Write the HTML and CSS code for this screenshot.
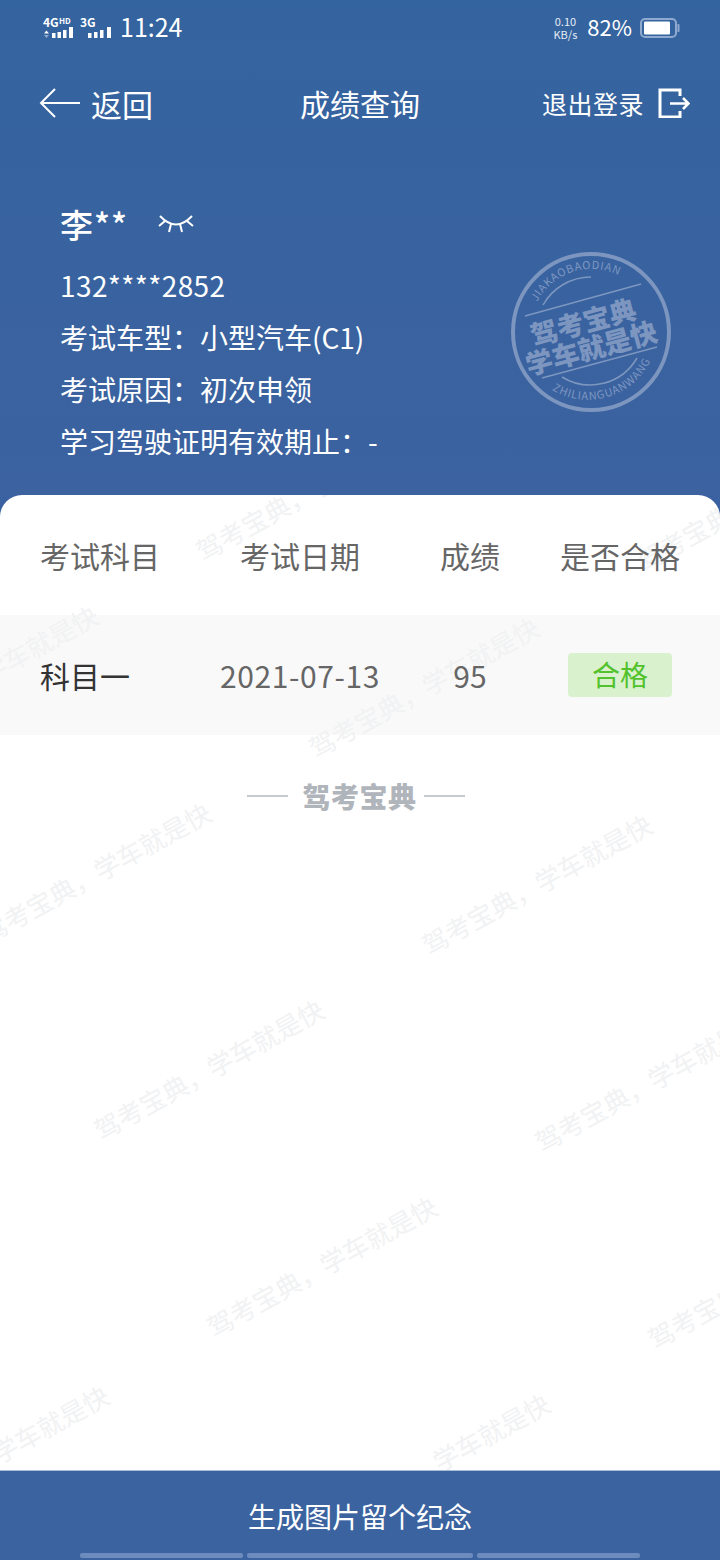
FILE: index.html
```html
<!DOCTYPE html>
<html lang="zh-CN">
<head>
    <meta charset="UTF-8">
    <meta name="viewport" content="width=device-width, initial-scale=1.0">
    <title>成绩查询</title>
    <link rel="stylesheet" href="styles.css">
</head>
<body>

    <div class="top">
        <div class="status-bar">
            <svg class="signal" width="72" height="30" viewBox="0 -6 72 30">
                <text x="1" y="9.500" class="sig-big">4G</text>
                <text x="17" y="6.500" class="sig-small">HD</text>
                <path d="M2 16.500l2.500-3 2.500 3z" fill="#fff"/>
                <path d="M2 18l2.500 3 2.500-3z" fill="#8fa9cf"/>
                <path d="M10 16h3.500v5h-3.500zM15.500 15h3.500v6h-3.500zM21 13h3.500v8h-3.500zM27 10h4v11h-4z" fill="#fff"/>
                <text x="38" y="9.500" class="sig-big">3G</text>
                <path d="M46 16h3.500v5h-3.500zM52 15h3.500v6h-3.500zM58 13h3.500v8h-3.500zM65 10h4v11h-4z" fill="#fff"/>
            </svg>
            <span class="clock">11:24</span>
            <div class="status-right">
                <div class="speed"><span>0.10</span><span>KB/s</span></div>
                <span class="percent">82%</span>
                <svg class="battery" width="40" height="20" viewBox="0 0 40 20">
                    <rect x="1" y="1" width="35" height="18" rx="4" fill="none" stroke="#8fa9cf" stroke-width="2"/>
                    <rect x="4" y="3.500" width="26" height="13" rx="1" fill="#fff"/>
                    <path d="M37.500 6h1a1 1 0 0 1 1 1v6a1 1 0 0 1-1 1h-1z" fill="#8fa9cf"/>
                </svg>
            </div>
        </div>

        <div class="nav">
            <div class="nav-left">
                <svg width="42" height="32" viewBox="0 0 42 32">
                    <path d="M41 16H3M16 2L2 16l14 14" fill="none" stroke="#fff" stroke-width="2"/>
                </svg>
                <span>返回</span>
            </div>
            <div class="nav-title">成绩查询</div>
            <div class="nav-right">
                <span>退出登录</span>
                <svg width="32" height="30" viewBox="0 0 32 30">
                    <path d="M22 8V2H2v27h20v-6" fill="none" stroke="#fff" stroke-width="3"/>
                    <path d="M12 15.500h18M25 10l5.500 5.500L25 21" fill="none" stroke="#fff" stroke-width="2.500"/>
                </svg>
            </div>
        </div>

        <div class="info">
            <div class="name-row">
                <span class="name">李**</span>
                <svg width="36" height="24" viewBox="0 0 36 24">
                    <path d="M2 4Q18 21 34 4" fill="none" stroke="#fff" stroke-width="2"/>
                    <path d="M7 9L1 14M13 12l-2 8M22 12l2 8M29 9l6 5" fill="none" stroke="#fff" stroke-width="2"/>
                </svg>
            </div>
            <p class="phone">132****2852</p>
            <p>考试车型：小型汽车(C1)</p>
            <p>考试原因：初次申领</p>
            <p>学习驾驶证明有效期止：-</p>
        </div>

        <svg class="stamp" width="200" height="180" viewBox="0 0 200 180">
            <defs>
                <path id="arcTop" d="M47 62A62 62 0 0 1 134 38"/>
                <path id="arcBottom" d="M62 150A70 70 0 0 0 160 122"/>
            </defs>
            <circle cx="101" cy="92" r="78" fill="none" stroke="#7d96c0" stroke-width="4"/>
            <path d="M53 65A55 55 0 0 1 101 37M72 137A54 54 0 0 0 147 118" fill="none" stroke="#7d96c0" stroke-width="1.500"/>
            <path d="M35 76L151 44M52 138L167 107" fill="none" stroke="#7d96c0" stroke-width="1.500"/>
            <text class="stamp-small"><textPath href="#arcTop">JIAKAOBAODIAN</textPath></text>
            <text class="stamp-small"><textPath href="#arcBottom">ZHILIANGUANWANG</textPath></text>
            <text class="stamp-big" text-anchor="middle" transform="translate(96 92) rotate(-15)">驾考宝典</text>
            <text class="stamp-big" text-anchor="middle" transform="translate(104 118) rotate(-15)">学车就是快</text>
        </svg>
    </div>

    <div class="panel">
        <div class="grid-row head-row">
            <div class="col-subject">考试科目</div>
            <div>考试日期</div>
            <div>成绩</div>
            <div>是否合格</div>
        </div>
        <div class="grid-row data-row">
            <div class="col-subject subject">科目一</div>
            <div class="date">2021-07-13</div>
            <div>95</div>
            <div><span class="pass">合格</span></div>
        </div>
        <div class="brand">
            <span class="brand-line"></span>
            <span class="brand-text">驾考宝典</span>
            <span class="brand-line"></span>
        </div>

        <svg class="watermark" width="720" height="975" viewBox="0 0 720 975">
            <text transform="translate(203 67) rotate(-29)">驾考宝典，学车就是快</text>
            <text transform="translate(316 264) rotate(-29)">驾考宝典，学车就是快</text>
            <text transform="translate(429 461) rotate(-29)">驾考宝典，学车就是快</text>
            <text transform="translate(542 658) rotate(-29)">驾考宝典，学车就是快</text>
            <text transform="translate(655 855) rotate(-29)">驾考宝典，学车就是快</text>
            <text transform="translate(644 77) rotate(-29)">驾考宝典，学车就是快</text>
            <text transform="translate(-125 252) rotate(-29)">驾考宝典，学车就是快</text>
            <text transform="translate(-12 449) rotate(-29)">驾考宝典，学车就是快</text>
            <text transform="translate(101 646) rotate(-29)">驾考宝典，学车就是快</text>
            <text transform="translate(214 843) rotate(-29)">驾考宝典，学车就是快</text>
            <text transform="translate(327 1040) rotate(-29)">驾考宝典，学车就是快</text>
            <text transform="translate(-114 1032) rotate(-29)">驾考宝典，学车就是快</text>
        </svg>
    </div>

    <div class="footer">
        <div class="footer-btn">生成图片留个纪念</div>
        <div class="gesture">
            <span class="g1"></span>
            <span class="g2"></span>
            <span class="g3"></span>
        </div>
    </div>

</body>
</html>
```

FILE: styles.css
```css
* {
    margin: 0;
    padding: 0;
    box-sizing: border-box;
}

body {
    font-family: 'Noto Sans CJK SC', 'Noto Sans', sans-serif;
    width: 720px;
    height: 1560px;
    overflow: hidden;
    display: flex;
    flex-direction: column;
    background: #3b62a0;
    color: #ffffff;
}

.top {
    position: relative;
    height: 495px;
    background: linear-gradient(180deg, #34649f, #3c62a0);
}

.status-bar {
    height: 52px;
    padding: 0 40px 0 42px;
    display: flex;
    align-items: center;
}

.sig-big {
    font-size: 12px;
    font-weight: 700;
    fill: #fff;
}

.sig-small {
    font-size: 8px;
    font-weight: 700;
    fill: #fff;
}

.clock {
    font-size: 25px;
    line-height: 1;
    margin-left: 6px;
}

.status-right {
    margin-left: auto;
    display: flex;
    align-items: center;
}

.speed {
    display: flex;
    flex-direction: column;
    align-items: center;
    font-size: 11px;
    line-height: 13px;
    color: #e6ecf5;
    margin-top: 4px;
}

.percent {
    font-size: 22px;
    line-height: 1;
    margin: 0 8px 0 10px;
}

.battery {
    margin-top: 4px;
}

.nav {
    height: 102px;
    padding: 0 30px 0 39px;
    display: flex;
    align-items: center;
    justify-content: space-between;
    position: relative;
}

.nav-left {
    display: flex;
    align-items: center;
    font-size: 31px;
    gap: 10px;
}

.nav-title {
    position: absolute;
    left: 0;
    right: 0;
    text-align: center;
    font-size: 30px;
}

.nav-right {
    display: flex;
    align-items: center;
    font-size: 25px;
    letter-spacing: 0.500px;
    gap: 14px;
}

.info {
    padding: 46px 0 0 60px;
    font-size: 28px;
}

.info p {
    height: 52px;
    line-height: 52px;
}

.info .phone {
    letter-spacing: 0.400px;
}

.name-row {
    display: flex;
    align-items: center;
    height: 48px;
    margin-bottom: 11px;
}

.name {
    font-size: 33px;
    font-weight: 500;
    letter-spacing: 1px;
    width: 98px;
}

.stamp {
    position: absolute;
    left: 490px;
    top: 240px;
}

.stamp-small {
    font-size: 11px;
    letter-spacing: 0.800px;
    fill: #7d96c0;
}

.stamp-big {
    font-size: 27px;
    font-weight: 900;
    fill: #7d96c0;
}

.panel {
    position: relative;
    flex: 1;
    overflow: hidden;
    background: #ffffff;
    border-radius: 22px 22px 0 0;
    color: #666666;
    font-size: 30px;
}

.grid-row {
    display: grid;
    grid-template-columns: 200px 200px 140px 160px;
    align-items: center;
    text-align: center;
    height: 120px;
}

/* cells stay above the watermark, the row background stays under it */
.grid-row > div {
    position: relative;
    z-index: 1;
}

.col-subject {
    text-align: left;
    padding-left: 40px;
}

.data-row {
    background: #f9f9f9;
}

.grid-row > .subject {
    color: #333333;
}

.date {
    letter-spacing: 0.600px;
}

.pass {
    display: inline-block;
    width: 104px;
    height: 44px;
    line-height: 42px;
    margin-bottom: 2px;
    border-radius: 4px;
    background: #d9f1cc;
    color: #52c22c;
    font-size: 28px;
}

.brand {
    display: flex;
    align-items: center;
    justify-content: center;
    height: 122px;
    padding-right: 8px;
    color: #b0b4bb;
}

.brand-line {
    width: 41px;
    height: 2px;
    background: #c6c9ce;
}

.brand-text {
    margin: 0 7px 0 14px;
    font-size: 28px;
    font-weight: 900;
    letter-spacing: 0.500px;
}

.watermark {
    position: absolute;
    left: 0;
    top: 0;
    pointer-events: none;
    font-size: 25.800px;
    fill: #f1f2f3;
}

.footer {
    height: 90px;
    background: #3b63a0;
    border-top: 1px solid #a9bcd6;
}

.footer-btn {
    height: 82px;
    line-height: 90px;
    text-align: center;
    font-size: 28px;
}

.gesture {
    display: flex;
    padding-left: 80px;
    gap: 4px;
}

.gesture span {
    height: 5px;
    border-radius: 2px;
    background: #6d8cbd;
}

.g1 {
    width: 163px;
}

.g2 {
    width: 226px;
}

.g3 {
    width: 163px;
}
```
